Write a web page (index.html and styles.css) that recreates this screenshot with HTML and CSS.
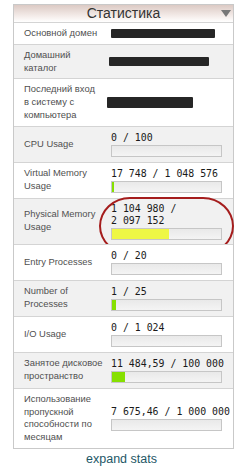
FILE: index.html
```html
<!DOCTYPE html>
<html lang="ru">
  <head>
    <meta charset="UTF-8" />
    <meta name="viewport" content="width=device-width, initial-scale=1.0" />
    <title>Статистика</title>
    <link rel="stylesheet" href="styles.css">
  </head>
  <body>
    <div class="panel">
      <div class="panel-head">
        Статистика
        <svg class="toggle" width="10" height="7" viewBox="0 0 10 7">
          <polygon points="0,0 10,0 5,7" fill="#777" />
        </svg>
      </div>

      <div class="row">
        <div class="label">Основной домен</div>
        <div class="value"><span class="redact redact-domain"></span></div>
      </div>

      <div class="row alt">
        <div class="label">Домашний<br>каталог</div>
        <div class="value"><span class="redact redact-home"></span></div>
      </div>

      <div class="row">
        <div class="label">Последний вход<br>в систему с<br>компьютера</div>
        <div class="value"><span class="redact redact-ip"></span></div>
      </div>

      <div class="row meter alt">
        <div class="label">CPU Usage</div>
        <div class="value">
          <div class="num">0 / 100</div>
          <div class="bar"></div>
        </div>
      </div>

      <div class="row meter">
        <div class="label">Virtual Memory<br>Usage</div>
        <div class="value">
          <div class="num">17 748 / 1 048 576</div>
          <div class="bar"><div class="fill" style="width: 1.7%"></div></div>
        </div>
      </div>

      <div class="row meter alt marked">
        <div class="label">Physical Memory<br>Usage</div>
        <div class="value">
          <div class="num">1 104 980 /<br>2 097 152</div>
          <div class="bar"><div class="fill warn" style="width: 52.7%"></div></div>
        </div>
        <div class="circle"></div>
      </div>

      <div class="row meter">
        <div class="label">Entry Processes</div>
        <div class="value">
          <div class="num">0 / 20</div>
          <div class="bar"></div>
        </div>
      </div>

      <div class="row meter alt">
        <div class="label">Number of<br>Processes</div>
        <div class="value">
          <div class="num">1 / 25</div>
          <div class="bar"><div class="fill" style="width: 4%"></div></div>
        </div>
      </div>

      <div class="row meter">
        <div class="label">I/O Usage</div>
        <div class="value">
          <div class="num">0 / 1 024</div>
          <div class="bar"></div>
        </div>
      </div>

      <div class="row meter alt">
        <div class="label">Занятое дисковое<br>пространство</div>
        <div class="value">
          <div class="num">11 484,59 / 100 000</div>
          <div class="bar"><div class="fill" style="width: 11.5%"></div></div>
        </div>
      </div>

      <div class="row meter">
        <div class="label">Использование<br>пропускной<br>способности по<br>месяцам</div>
        <div class="value">
          <div class="num">7 675,46 / 1 000 000</div>
          <div class="bar"></div>
        </div>
      </div>
    </div>

    <div class="expand"><a href="#">expand stats</a></div>
  </body>
</html>
```

FILE: styles.css
```css
body {
  margin: 0;
  padding-top: 4px;
  background: #fff;
  font-family: "Liberation Sans", Arial, sans-serif;
}
.panel {
  width: 221px;
  margin-left: 13px;
  border: 1px solid #c9c9c9;
  box-sizing: border-box;
}
.panel-head {
  position: relative;
  height: 17px;
  line-height: 17px;
  text-align: center;
  font-size: 14px;
  color: #333;
  background: linear-gradient(#dccac4, #f6efed 70%, #fff);
}
.toggle {
  position: absolute;
  right: 2px;
  top: 5px;
}
.row {
  position: relative;
  display: grid;
  grid-template-columns: 97px 1fr;
  align-items: center;
  padding: 4px 9px 4px 0;
  border-top: 1px solid #d4d4d4;
  background: #fff;
}
.row.alt {
  background: #f1f1f1;
}
.row.meter {
  min-height: 27px;
}
.label {
  padding-left: 10px;
  font-size: 9.4px;
  line-height: 12.8px;
  color: #505050;
}
.num {
  font-family: "DejaVu Sans Mono", monospace;
  font-size: 9.9px;
  line-height: 12.5px;
  color: #1a1a1a;
  white-space: nowrap;
}
.bar {
  height: 10px;
  width: 109px;
  border: 1px solid #c6c6c6;
  background: linear-gradient(#e9e9e9, #f4f4f4);
}
.fill {
  height: 100%;
  background: #86e000;
}
.fill.warn {
  background: #eef745;
}
.redact {
  display: block;
  height: 9px;
  background: #262626;
  border-radius: 1px;
}
.redact-domain {
  width: 104px;
}
.redact-home {
  width: 100px;
  margin-left: -2px;
}
.redact-ip {
  width: 86px;
  height: 11px;
  margin-left: -4px;
}
.circle {
  position: absolute;
  left: 85px;
  top: -2px;
  width: 135px;
  height: 58px;
  border: 2px solid #a51d1d;
  border-radius: 32px / 30px;
  box-sizing: border-box;
}
.expand {
  margin-top: 3px;
  text-align: center;
  font-size: 12.5px;
}
.expand a {
  color: #1d5766;
  text-decoration: none;
}
```
